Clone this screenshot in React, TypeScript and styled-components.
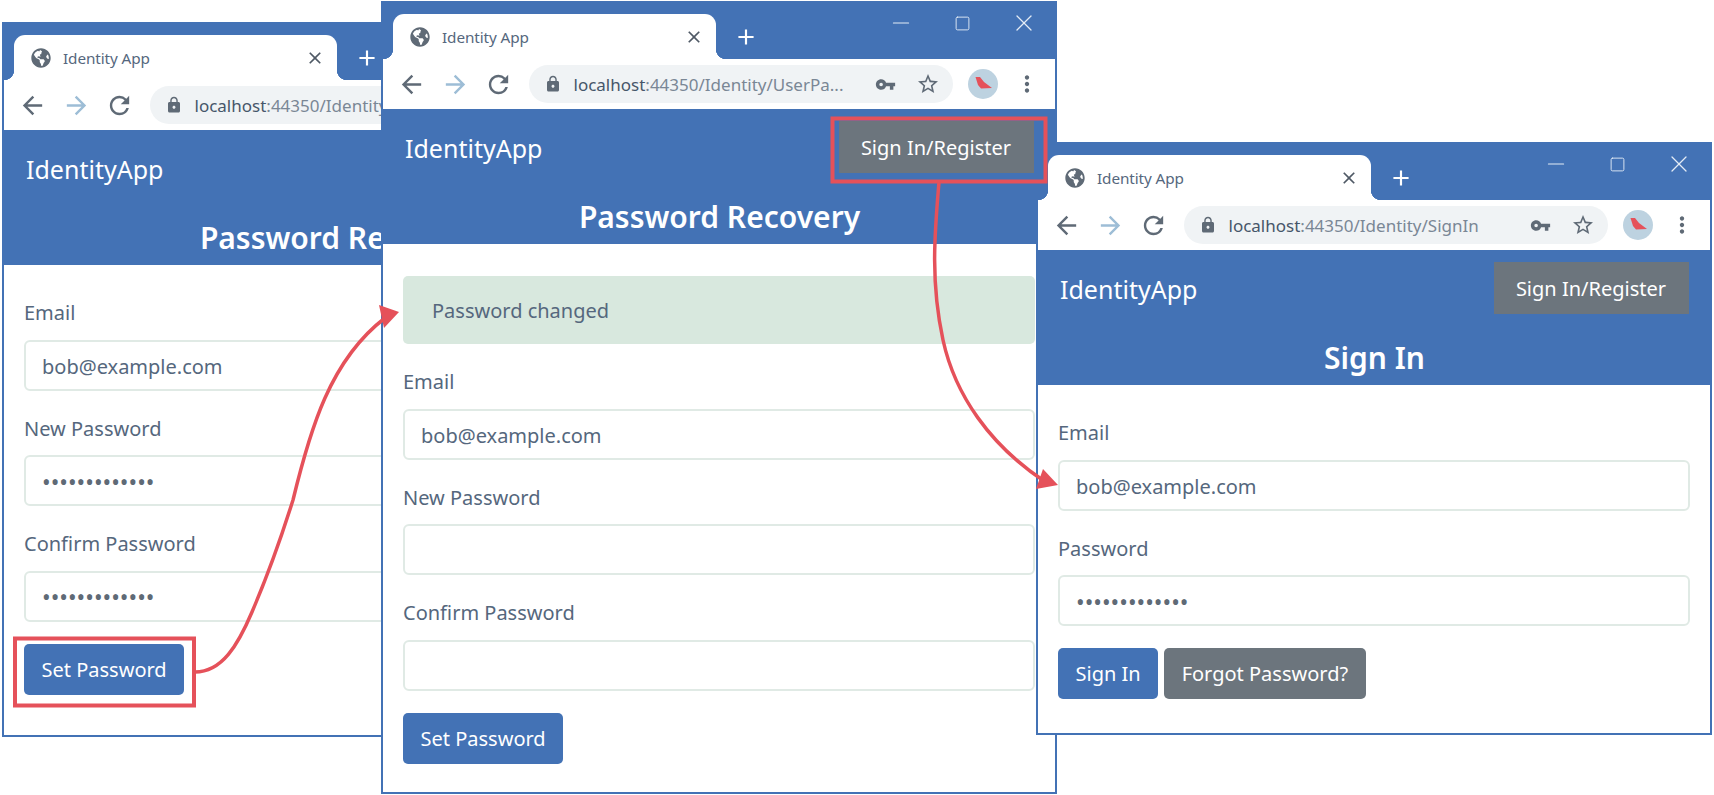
import React from 'react';
import styled, { createGlobalStyle } from 'styled-components';
import { FaGlobeAmericas } from 'react-icons/fa';
import {
  MdAdd,
  MdArrowBack,
  MdArrowForward,
  MdClose,
  MdLock,
  MdMoreVert,
  MdRefresh,
  MdStarBorder,
  MdVpnKey,
} from 'react-icons/md';
import { Minus, Square, X } from 'lucide-react';

const BLUE = '#4372b5';
const GREY = '#6c757d';
const INK = '#55677d';
const RED = '#e5515a';

const GlobalStyle = createGlobalStyle`
  html, body {
    margin: 0;
    background: #ffffff;
  }
  body {
    font-family: "Noto Sans", "Liberation Sans", sans-serif;
    overflow: hidden;
  }
`;

const Desktop = styled.div`
  position: relative;
  width: 1714px;
  height: 795px;
  overflow: hidden;
`;

const Window = styled.div<{ $left: number; $top: number; $height: number }>`
  position: absolute;
  left: ${(p) => p.$left}px;
  top: ${(p) => p.$top}px;
  width: 676px;
  height: ${(p) => p.$height}px;
  box-sizing: border-box;
  border: 2px solid ${BLUE};
  background: #ffffff;
  display: flex;
  flex-direction: column;
`;

const TabStrip = styled.div`
  height: 56px;
  flex: none;
  background: ${BLUE};
  display: flex;
  align-items: flex-end;
  padding-left: 10px;
`;

const Tab = styled.div`
  position: relative;
  width: 323px;
  height: 45px;
  box-sizing: border-box;
  padding: 0 12px 0 17px;
  background: #ffffff;
  border-radius: 11px 11px 0 0;
  display: flex;
  align-items: center;
  gap: 12px;
  color: ${INK};

  &::before,
  &::after {
    content: '';
    position: absolute;
    bottom: 0;
    width: 10px;
    height: 10px;
  }
  &::before {
    left: -10px;
    background: radial-gradient(circle at 0 0, ${BLUE} 10px, #ffffff 10.5px);
  }
  &::after {
    right: -10px;
    background: radial-gradient(circle at 100% 0, ${BLUE} 10px, #ffffff 10.5px);
  }
`;

const TabTitle = styled.span`
  flex: 1;
  font-size: 15.3px;
  letter-spacing: -0.1px;
`;

const NewTab = styled.div`
  width: 30px;
  height: 30px;
  margin: 0 0 7px 15px;
  display: flex;
  align-items: center;
  justify-content: center;
  color: #ffffff;
`;

const WindowControls = styled.div`
  margin-left: auto;
  align-self: flex-start;
  display: flex;
`;

const ControlSlot = styled.div`
  width: 61.5px;
  height: 40px;
  display: flex;
  align-items: center;
  justify-content: center;
  color: #e4ecf6;
`;

const Toolbar = styled.div`
  height: 50px;
  flex: none;
  box-sizing: border-box;
  padding-left: 7px;
  background: #ffffff;
  display: flex;
  align-items: center;
`;

const NavSlot = styled.div<{ $faded?: boolean }>`
  width: 43.5px;
  display: flex;
  align-items: center;
  justify-content: center;
  color: ${(p) => (p.$faded ? '#9dbdd6' : '#5f6a76')};
`;

const AddressBar = styled.div`
  width: 424px;
  height: 38px;
  margin-left: 8px;
  box-sizing: border-box;
  padding: 0 13px 0 15px;
  border-radius: 19px;
  background: #f0f3f5;
  display: flex;
  align-items: center;
  color: #5f6a76;
`;

const Url = styled.span`
  margin-left: 12px;
  font-size: 17px;
  color: #7a8795;
  white-space: nowrap;
`;

const UrlHost = styled.span`
  color: #46566a;
`;

const AddressIcons = styled.div`
  margin-left: auto;
  display: flex;
  align-items: center;
  gap: 20px;
`;

const Avatar = styled.svg`
  margin-left: 14px;
  flex: none;
`;

const MenuSlot = styled.div`
  width: 30px;
  margin-left: 13px;
  display: flex;
  justify-content: center;
  color: #5f6a76;
`;

const SiteHeader = styled.header`
  height: 135px;
  flex: none;
  box-sizing: border-box;
  padding: 12px 21px 0 22px;
  background: ${BLUE};
  color: #ffffff;
`;

const NavRow = styled.div`
  height: 52px;
  display: flex;
  align-items: center;
  justify-content: space-between;
`;

const Brand = styled.div`
  padding-top: 2px;
  font-size: 25px;
`;

const PageTitle = styled.h1`
  margin: 26px 0 0;
  font-size: 30px;
  line-height: 36px;
  font-weight: 600;
  text-align: center;
`;

const Body = styled.main`
  padding: 34px 20px 0 20px;
`;

const Alert = styled.div`
  height: 68px;
  margin: -2px 0 24px;
  box-sizing: border-box;
  padding-left: 29px;
  border-radius: 5px;
  background: #d8e8de;
  color: ${INK};
  font-size: 20px;
  display: flex;
  align-items: center;
`;

const FieldGroup = styled.div`
  margin-bottom: 24px;
`;

const Label = styled.div`
  height: 27px;
  margin-bottom: 13.5px;
  font-size: 20px;
  line-height: 28px;
  color: ${INK};
`;

const Field = styled.div<{ $secret?: boolean }>`
  height: 51px;
  box-sizing: border-box;
  padding: 2px 0 0 16px;
  border: 2px solid #e0eae5;
  border-radius: 6px;
  background: #ffffff;
  color: ${(p) => (p.$secret ? '#5f6a76' : INK)};
  font-size: ${(p) => (p.$secret ? '23px' : '20px')};
  display: flex;
  align-items: center;
`;

const Actions = styled.div`
  margin-top: -2px;
  display: flex;
  gap: 6px;
`;

const Button = styled.div<{ $variant?: 'primary' | 'secondary' }>`
  height: 51px;
  box-sizing: border-box;
  padding: 0 17.5px;
  border-radius: 5px;
  background: ${(p) => (p.$variant === 'secondary' ? GREY : BLUE)};
  color: #ffffff;
  font-size: 20px;
  display: inline-flex;
  align-items: center;
  white-space: nowrap;
`;

const NavButton = styled(Button)`
  height: 52px;
  padding: 0 23px 0 22px;
  border-radius: 0;
  background: ${GREY};
`;

const Annotations = styled.svg`
  position: absolute;
  left: 0;
  top: 0;
  pointer-events: none;
`;

const BrowserChrome = ({ host, path }: { host: string; path: string }) => (
  <>
    <TabStrip>
      <Tab>
        <FaGlobeAmericas size={20} color="#5f6a76" />
        <TabTitle>Identity App</TabTitle>
        <MdClose size={20} color="#4f5965" />
      </Tab>
      <NewTab>
        <MdAdd size={26} />
      </NewTab>
      <WindowControls>
        <ControlSlot>
          <Minus size={26} strokeWidth={1} />
        </ControlSlot>
        <ControlSlot>
          <Square size={17} strokeWidth={1.3} />
        </ControlSlot>
        <ControlSlot>
          <X size={28} strokeWidth={1.1} />
        </ControlSlot>
      </WindowControls>
    </TabStrip>
    <Toolbar>
      <NavSlot>
        <MdArrowBack size={29} />
      </NavSlot>
      <NavSlot $faded>
        <MdArrowForward size={29} />
      </NavSlot>
      <NavSlot>
        <MdRefresh size={29} />
      </NavSlot>
      <AddressBar>
        <MdLock size={18} />
        <Url>
          <UrlHost>{host}</UrlHost>
          {path}
        </Url>
        <AddressIcons>
          <MdVpnKey size={21} />
          <MdStarBorder size={24} />
        </AddressIcons>
      </AddressBar>
      <Avatar width="32" height="32" viewBox="0 0 32 32">
        <circle cx="16" cy="16" r="15" fill="#bdd2e0" />
        <path d="M8.5 9 L13 9 L17 14 L25 20 L14 20.5 L11 17 Z" fill={RED} />
      </Avatar>
      <MenuSlot>
        <MdMoreVert size={26} />
      </MenuSlot>
    </Toolbar>
  </>
);

const Header = ({ title, signIn = true }: { title: string; signIn?: boolean }) => (
  <SiteHeader>
    <NavRow>
      <Brand>IdentityApp</Brand>
      {signIn && <NavButton>Sign In/Register</NavButton>}
    </NavRow>
    <PageTitle>{title}</PageTitle>
  </SiteHeader>
);

const FormField = ({ label, value, secret }: { label: string; value?: string; secret?: boolean }) => (
  <FieldGroup>
    <Label>{label}</Label>
    <Field $secret={secret}>{value}</Field>
  </FieldGroup>
);

const DOTS = '•••••••••••••';

export default function App() {
  return (
    <Desktop>
      <GlobalStyle />

      <Window $left={2} $top={22} $height={715}>
        <BrowserChrome host="localhost" path=":44350/Identity/UserPa..." />
        <Header title="Password Recovery" signIn={false} />
        <Body>
          <FormField label="Email" value="bob@example.com" />
          <FormField label="New Password" value={DOTS} secret />
          <FormField label="Confirm Password" value={DOTS} secret />
          <Actions>
            <Button>Set Password</Button>
          </Actions>
        </Body>
      </Window>

      <Window $left={381} $top={1} $height={793}>
        <BrowserChrome host="localhost" path=":44350/Identity/UserPa..." />
        <Header title="Password Recovery" />
        <Body>
          <Alert>Password changed</Alert>
          <FormField label="Email" value="bob@example.com" />
          <FormField label="New Password" />
          <FormField label="Confirm Password" />
          <Actions>
            <Button>Set Password</Button>
          </Actions>
        </Body>
      </Window>

      <Window $left={1036} $top={142} $height={593}>
        <BrowserChrome host="localhost" path=":44350/Identity/SignIn" />
        <Header title="Sign In" />
        <Body>
          <FormField label="Email" value="bob@example.com" />
          <FormField label="Password" value={DOTS} secret />
          <Actions>
            <Button>Sign In</Button>
            <Button $variant="secondary">Forgot Password?</Button>
          </Actions>
        </Body>
      </Window>

      <Annotations width="1714" height="795" viewBox="0 0 1714 795" fill="none">
        <rect x="15" y="638.5" width="179" height="67" stroke={RED} strokeWidth="4" />
        <rect x="832.5" y="118.5" width="213" height="63" stroke={RED} strokeWidth="4" />
        <path
          d="M195 672 C222 672 238 645 252 612 C270 570 282 535 293 500 C310 430 330 360 385 318"
          stroke={RED}
          strokeWidth="3.5"
        />
        <polygon points="399,312 379,305 384,328" fill={RED} />
        <path
          d="M939 182 C935 230 930 280 943 340 C955 395 990 445 1044 481"
          stroke={RED}
          strokeWidth="3.5"
        />
        <polygon points="1058,485 1043,469 1036,489" fill={RED} />
      </Annotations>
    </Desktop>
  );
}
